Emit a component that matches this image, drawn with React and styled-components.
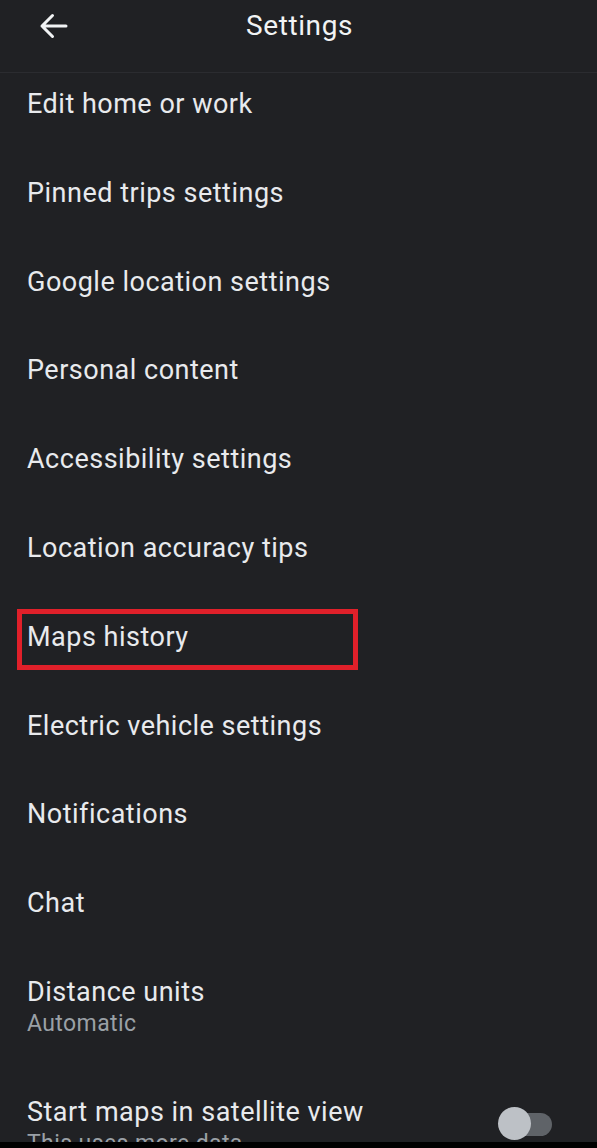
import React from "react";
import styled, { createGlobalStyle } from "styled-components";

const GlobalStyle = createGlobalStyle`
  html, body {
    margin: 0;
    padding: 0;
    background: #000;
  }
  body {
    font-family: Roboto, "Liberation Sans", sans-serif;
  }
`;

const Screen = styled.div`
  width: 597px;
  height: 1142px;
  overflow: hidden;
  background: #202124;
  color: #e8eaed;
`;

const Header = styled.header`
  position: relative;
  height: 72px;
  display: flex;
  align-items: center;
  justify-content: center;
  border-bottom: 1px solid #2b2c30;
`;

const BackButton = styled.button`
  position: absolute;
  left: 36px;
  top: 9px;
  width: 34px;
  height: 34px;
  padding: 0;
  border: none;
  background: none;
  display: flex;
  align-items: center;
  justify-content: center;
`;

const Title = styled.h1`
  margin: 0 0 0 2px;
  align-self: flex-start;
  padding-top: 9px;
  font-size: 28px;
  line-height: 34px;
  font-weight: 400;
  letter-spacing: 0.6px;
  color: #f1f3f4;
`;

const List = styled.div`
  display: flex;
  flex-direction: column;
`;

const Row = styled.div`
  position: relative;
  display: flex;
  align-items: flex-start;
  justify-content: space-between;
  padding: 15px 45px 0 27px;
  height: ${(p) => (p.$sub ? "119.8px" : "88.8px")};
  box-sizing: border-box;
`;

const Texts = styled.div`
  display: flex;
  flex-direction: column;
`;

const Label = styled.div`
  font-size: 27px;
  line-height: 32px;
  letter-spacing: 0.5px;
  color: #e8eaed;
`;

const Sub = styled.div`
  font-size: 23px;
  line-height: 31px;
  letter-spacing: 0.4px;
  color: #9aa0a6;
`;

const Highlight = styled.div`
  position: absolute;
  left: 17px;
  top: 3px;
  width: 341px;
  height: 61px;
  border: 5px solid #e0202a;
  box-sizing: border-box;
  pointer-events: none;
`;

const Toggle = styled.div`
  position: relative;
  margin-top: 11px;
  width: 54px;
  height: 34px;
  flex-shrink: 0;
`;

const Track = styled.div`
  position: absolute;
  left: 2px;
  right: 0;
  top: 6px;
  height: 23px;
  border-radius: 12px;
  background: #5f6368;
`;

const Thumb = styled.div`
  position: absolute;
  left: 0;
  top: 0;
  width: 33px;
  height: 33px;
  border-radius: 50%;
  background: #bdc1c6;
`;

const items = [
  { label: "Edit home or work" },
  { label: "Pinned trips settings" },
  { label: "Google location settings" },
  { label: "Personal content" },
  { label: "Accessibility settings" },
  { label: "Location accuracy tips" },
  { label: "Maps history", marked: true },
  { label: "Electric vehicle settings" },
  { label: "Notifications" },
  { label: "Chat" },
  { label: "Distance units", sub: "Automatic" },
  { label: "Start maps in satellite view", sub: "This uses more data", toggle: true },
];

function BackArrow() {
  return (
    <svg width="30" height="26" viewBox="0 0 30 26" fill="none">
      <path
        d="M28 13H4M14.5 2.5L4 13l10.5 10.5"
        stroke="#f1f3f4"
        strokeWidth="3"
        strokeLinecap="round"
        strokeLinejoin="round"
      />
    </svg>
  );
}

export default function App() {
  return (
    <>
      <GlobalStyle />
      <Screen>
        <Header>
          <BackButton aria-label="Back">
            <BackArrow />
          </BackButton>
          <Title>Settings</Title>
        </Header>
        <List>
          {items.map((item) => (
            <Row key={item.label} $sub={!!item.sub}>
              <Texts>
                <Label>{item.label}</Label>
                {item.sub && <Sub>{item.sub}</Sub>}
              </Texts>
              {item.toggle && (
                <Toggle>
                  <Track />
                  <Thumb />
                </Toggle>
              )}
              {item.marked && <Highlight />}
            </Row>
          ))}
        </List>
      </Screen>
    </>
  );
}
